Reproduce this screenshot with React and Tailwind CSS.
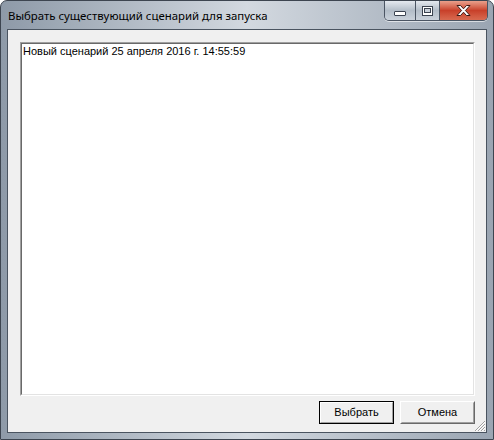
import React from 'react';

const CaptionButtons = () => (
  <div className="flex h-[20px] rounded-b-[5px] border border-t-0 border-[#4b5563] overflow-hidden shadow-[0_1px_0_rgba(255,255,255,0.6)]">
    {/* minimize */}
    <div className="w-[31px] flex items-center justify-center border-r border-[#4b5563] bg-gradient-to-b from-[#e4e9ef] via-[#b3bdc8] to-[#cad2db]">
      <div className="w-[12px] h-[5px] mt-[5px] bg-white border border-[#3b4350] rounded-[1px]" />
    </div>
    {/* maximize */}
    <div className="w-[24px] flex items-center justify-center border-r border-[#4b5563] bg-gradient-to-b from-[#e4e9ef] via-[#b3bdc8] to-[#cad2db]">
      <div className="w-[11px] h-[10px] border border-[#3b4350] bg-white flex items-center justify-center">
        <div className="w-[7px] h-[5px] border border-[#3b4350] bg-[#c9d1da]" />
      </div>
    </div>
    {/* close */}
    <div className="w-[47px] flex items-center justify-center bg-gradient-to-b from-[#e9a08c] via-[#c8402a] to-[#d86a50]">
      <svg width="17" height="13" viewBox="0 0 17 13">
        <path d="M2 1.5h3.5l3 3.3 3-3.3h3.5l-4.6 5 4.6 5h-3.5l-3-3.3-3 3.3h-3.5l4.6-5z" fill="#fff" stroke="#3b1a14" strokeWidth="1" strokeLinejoin="round" />
      </svg>
    </div>
  </div>
);

const App = () => {
  return (
    <div className="w-[494px] h-[440px] bg-white" style={{ fontFamily: '"Liberation Sans", Arial, sans-serif' }}>
      <div className="w-[494px] h-[440px] flex flex-col rounded-t-[7px] border border-[#3d4550] bg-gradient-to-r from-[#8e9aa8] via-[#d3d9e0] to-[#9aa5b2] overflow-hidden">
        {/* Title bar */}
        <div className="h-[28px] flex items-start justify-between pl-[7px] pr-[5px]">
          <div
            className="pt-[7px] text-[11.4px] leading-[15px] text-black"
            style={{ fontFamily: '"Noto Sans", "Open Sans", sans-serif' }}
          >
            Выбрать существующий сценарий для запуска
          </div>
          <CaptionButtons />
        </div>

        {/* Client area */}
        <div className="flex-1 mx-[6px] mb-[6px] border border-[#4a5460] bg-[#f0f0f0] flex flex-col pt-[12px] pl-[12px] pr-[11px] pb-[8px] relative">
          <div className="flex-1 border border-t-[#a0a0a0] border-l-[#a0a0a0] border-b-white border-r-white">
            <div className="h-full border border-t-[#696969] border-l-[#696969] border-b-[#e3e3e3] border-r-[#e3e3e3] bg-white px-[1px]">
              <div className="text-[11px] leading-[13px] text-black pt-[1px]">
                Новый сценарий 25 апреля 2016 г. 14:55:59
              </div>
            </div>
          </div>

          <div className="flex justify-end gap-[6px] mt-[5px]">
            <button className="w-[75px] h-[23px] border border-black bg-[#f0f0f0] text-[11px] text-black">
              <div className="h-full border border-t-white border-l-white border-b-[#a0a0a0] border-r-[#a0a0a0] flex items-center justify-center">
                Выбрать
              </div>
            </button>
            <button className="w-[75px] h-[23px] border border-t-white border-l-white border-b-[#696969] border-r-[#696969] bg-[#f0f0f0] text-[11px] text-black">
              <div className="h-full border border-t-[#f0f0f0] border-l-[#f0f0f0] border-b-[#a0a0a0] border-r-[#a0a0a0] flex items-center justify-center">
                Отмена
              </div>
            </button>
          </div>

          {/* size grip */}
          <svg className="absolute right-0 bottom-0" width="12" height="12" viewBox="0 0 12 12">
            <path d="M11 1L1 11M11 4L4 11M11 7L7 11M11 10L10 11" stroke="#a0a0a0" strokeWidth="1" />
            <path d="M11 2L2 11M11 5L5 11M11 8L8 11" stroke="#fff" strokeWidth="1" />
          </svg>
        </div>
      </div>
    </div>
  );
};

export default App;
